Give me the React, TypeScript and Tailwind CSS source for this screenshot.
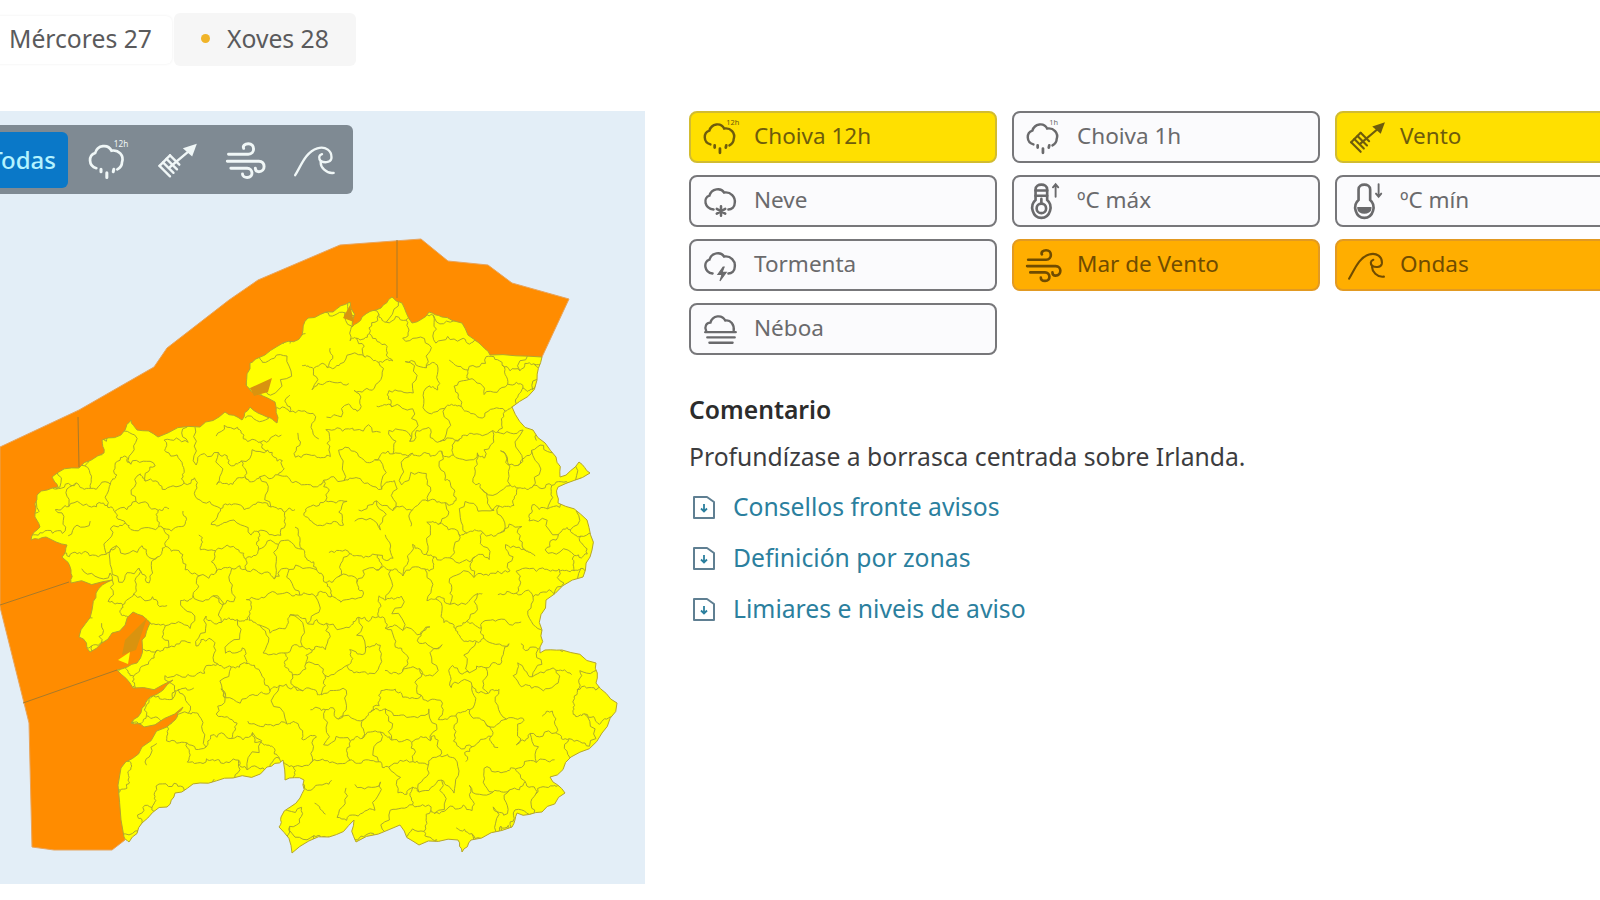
type Pt = [number, number];

const rng = (seed: number) => () => {
  seed = (seed + 0x6d2b79f5) | 0;
  let t = Math.imul(seed ^ (seed >>> 15), 1 | seed);
  t = (t + Math.imul(t ^ (t >>> 7), 61 | t)) ^ t;
  return ((t ^ (t >>> 14)) >>> 0) / 4294967296;
};

const LAND: Pt[] = [
  [542, 357], [490, 355], [479, 343], [462, 323], [442, 317], [429, 312], [412, 323], [402, 303], [392, 297],
  [381, 308], [362, 317], [352, 327], [350, 302], [333, 312], [308, 318], [302, 335], [283, 343], [258, 358],
  [250, 363], [246, 385], [275, 402], [277, 423], [267, 417], [250, 407], [242, 420], [225, 412], [200, 427],
  [158, 437], [137, 430], [131, 420], [125, 430], [102, 440], [104, 453], [79, 468], [52, 477], [58, 487],
  [37, 495], [35, 513], [40, 527], [31, 540], [46, 537], [67, 545], [62, 557], [71, 570], [71, 583], [112, 580],
  [96, 593], [92, 610], [79, 637], [90, 652], [112, 633], [133, 612], [150, 623], [142, 640], [137, 663],
  [117, 670], [133, 688], [173, 680], [150, 697], [142, 708], [131, 723], [144, 727], [183, 707], [175, 720],
  [142, 747], [121, 768], [124, 837], [129, 842], [142, 823], [167, 807], [175, 793], [200, 783], [233, 778],
  [267, 767], [283, 760], [285, 780], [304, 780], [300, 798], [281, 817], [279, 827], [292, 853], [329, 837],
  [354, 820], [356, 842], [400, 825], [419, 845], [458, 840], [462, 852], [471, 840], [512, 827], [517, 813],
  [542, 812], [565, 793], [550, 777], [571, 757], [602, 733], [617, 703], [596, 683], [596, 663], [562, 650],
  [540, 653], [542, 630], [546, 600], [583, 577], [592, 550], [587, 520], [558, 503], [558, 487], [590, 473],
  [579, 462], [560, 477], [556, 457], [533, 430], [512, 407], [537, 380],
];

const SEA: Pt[] = [
  [0, 447], [79, 410], [154, 367], [167, 348], [229, 300], [258, 280], [340, 245], [421, 239], [448, 261],
  [488, 265], [512, 283], [569, 299], [542, 357], [200, 720], [130, 790], [125, 840], [112, 850], [54, 850], [32, 847], [29, 723], [0, 607],
];

const toPath = (pts: Pt[], close = true) =>
  'M' + pts.map((p) => `${p[0].toFixed(1)} ${p[1].toFixed(1)}`).join('L') + (close ? 'Z' : '');

const wiggle = (a: Pt, b: Pt, amp: number, r: () => number, depth: number): Pt[] => {
  if (depth === 0) return [a, b];
  const dx = b[0] - a[0];
  const dy = b[1] - a[1];
  const k = (r() - 0.5) * amp;
  const m: Pt = [(a[0] + b[0]) / 2 - dy * k, (a[1] + b[1]) / 2 + dx * k];
  return [...wiggle(a, m, amp, r, depth - 1), ...wiggle(m, b, amp, r, depth - 1).slice(1)];
};

const roughLand = () => {
  const r = rng(11);
  const out: Pt[] = [];
  LAND.forEach((p, i) => out.push(...wiggle(p, LAND[(i + 1) % LAND.length], 0.3, r, 2).slice(1)));
  return toPath(out);
};

// municipal borders: jittered brick grid with some edges dropped, clipped to the land shape
const borders = () => {
  const r = rng(27);
  const cols = 42;
  const rows = 27;
  const v: Pt[][] = [];
  for (let j = 0; j < rows; j++) {
    v.push([]);
    for (let i = 0; i < cols; i++) {
      v[j].push([i * 16 + (r() - 0.5) * 14 - 8, 270 + j * 23.500 + (r() - 0.5) * 16]);
    }
  }
  let d = '';
  for (let j = 0; j < rows; j++) {
    for (let i = 0; i < cols; i++) {
      if (i + 1 < cols && r() > 0.22) d += toPath(wiggle(v[j][i], v[j][i + 1], 0.6, r, 3), false);
      if (j + 1 < rows && (i + j) % 2 === 0 && r() > 0.22) d += toPath(wiggle(v[j][i], v[j + 1][i], 0.6, r, 3), false);
    }
  }
  return d;
};

const GaliciaMap = () => (
  <svg className="absolute left-0 top-[-111px]" width="645" height="900" viewBox="0 0 645 900">
    <defs>
      <clipPath id="land">
        <path d={roughLand()} />
      </clipPath>
    </defs>
    <path d={toPath(SEA)} fill="#ff8c00" stroke="#e8a45c" strokeWidth="1" />
    <path d={roughLand()} fill="#ffff00" />
    <path d={borders()} clipPath="url(#land)" fill="none" stroke="#aaa92e" strokeWidth="1" />
    <path d={roughLand()} fill="none" stroke="#b5a52c" strokeWidth="1" />
    <path d="M397 240L397 298M78 417L79 467M0 605L69 582M23 703L117 670" fill="none" stroke="#a87a2a" strokeWidth="1" />
    <path d="M250 388L272 378L268 392L254 396ZM125 640L147 618L136 650L122 655ZM343 318L350 305L354 322Z" fill="#d9930f" />
    <path d="M118 660L130 652L128 664Z" fill="#ffff00" />
  </svg>
);

const RainIcon = ({ label, size = 38 }: { label: string; size?: number }) => (
  <svg width={size} height={size} viewBox="0 0 36 36" fill="none" stroke="currentColor" strokeWidth="2.300" strokeLinecap="round">
    <path d="M8 25C1 23 1 14 7 12C9 5 18 4 21 10C27 9 32 14 30 20C30 23 28 25 26 26" />
    <path d="M12 26v2M17 29v4M23 26l-.5 2" strokeWidth="2.600" />
    <text x="23" y="7" fontSize="7" fill="currentColor" stroke="none" fontFamily="Noto Sans, sans-serif">{label}</text>
  </svg>
);

const SnowIcon = () => (
  <svg width="38" height="38" viewBox="0 0 36 36" fill="none" stroke="currentColor" strokeWidth="2.300" strokeLinecap="round">
    <path d="M11 26C2 25 1 15 7 13C9 6 18 5 21 10C27 9 32 14 31 20C31 24 28 26 25 26" />
    <path d="M18 23v9M14 25.500l8 4.500M22 25.500l-8 4.500" strokeWidth="2.400" />
  </svg>
);

const StormIcon = () => (
  <svg width="38" height="38" viewBox="0 0 36 36" fill="none" stroke="currentColor" strokeWidth="2.300" strokeLinecap="round">
    <path d="M10 26C2 25 1 15 7 13C9 6 18 5 21 10C27 9 32 14 31 20C31 24 28 26 25 26" />
    <path d="M20 20l-5 7h4l-2 6 6-8h-4l2-5z" fill="currentColor" strokeWidth="1" />
  </svg>
);

const FogIcon = () => (
  <svg width="38" height="38" viewBox="0 0 36 36" fill="none" stroke="currentColor" strokeWidth="2.200" strokeLinecap="round">
    <path d="M4 20C2 16 4 12 8 12C10 5 19 4 22 10C27 9 31 14 30 20M3 21H32M5 26H31M7 31H29" />
  </svg>
);

const WindIcon = ({ size = 38 }: { size?: number }) => (
  <svg width={size} height={size} viewBox="0 0 36 36" fill="none" stroke="currentColor" strokeWidth="2.500" strokeLinecap="round">
    <path d="M3 13H20C26 13 26 4 20 4C17 4 15 6 16 8" />
    <path d="M2 19H29C35 19 35 28 29 28C27 28 26 27 26 25" />
    <path d="M5 25H19C24 25 25 33 19 33C17 33 15 32 15 30" />
  </svg>
);

const GustIcon = ({ size = 38 }: { size?: number }) => (
  <svg width={size} height={size} viewBox="0 0 36 36" fill="none" stroke="currentColor" strokeWidth="2" strokeLinecap="round">
    <path d="M12 24L31 8" />
    <path d="M35 4L23 8L31 15Z" fill="currentColor" stroke="none" />
    <path d="M3 23L12 32M6 20L15 29M9 17L18 26M12 14L20 22" />
    <path d="M3 23L12 14" />
  </svg>
);

const WaveIcon = ({ size = 38 }: { size?: number }) => (
  <svg width={size} height={size} viewBox="0 0 36 36" fill="none" stroke="currentColor" strokeWidth="2" strokeLinecap="round">
    <path d="M1 31C6 23 10 11 20 8C27 6 33 10 32 17C31 21 25 20 23 19C22 24 28 30 34 29" />
    <path d="M23 19C21 17 21 14 24 13" />
  </svg>
);

const ThermoIcon = ({ dir }: { dir: 'up' | 'down' }) => (
  <svg width="38" height="38" viewBox="0 0 36 36" fill="none" stroke="currentColor" strokeWidth="2.500" strokeLinecap="round">
    <path d="M10 17V7C10 1 21 1 21 7V17C27 22 24 34 15.500 34C7 34 4 22 10 17Z" />
    {dir === 'up' ? (
      <>
        <circle cx="15.500" cy="25" r="4.500" />
        <path d="M10 8H21M10 13H21M15.500 16V20" />
        <path d="M29 14V2M26.500 5L29 2L31.500 5" strokeWidth="1.800" />
      </>
    ) : (
      <>
        <path d="M10 25H21C21 30 10 30 10 25Z" fill="currentColor" />
        <path d="M29 2V14M26.500 11L29 14L31.500 11" strokeWidth="1.800" />
      </>
    )}
  </svg>
);

const FileIcon = () => (
  <svg width="24" height="26" viewBox="0 0 24 26" fill="none" stroke="#5f7f92" strokeWidth="2">
    <path d="M2 3H15L22 8V24H2Z" strokeLinejoin="round" />
    <path d="M12 10V17M9 14.500L12 17.500L15 14.500" stroke="#2b7f9e" strokeWidth="1.800" />
  </svg>
);

type Level = 'none' | 'yellow' | 'orange';

const levelStyles: Record<Level, string> = {
  none: 'bg-[#fbfbfd] border-[#77777a] text-[#6a6a6c]',
  yellow: 'bg-[#ffe000] border-[#d2bc30] text-[#6e5c0c]',
  orange: 'bg-[#ffae00] border-[#e29a22] text-[#704c00]',
};

const filters: { label: string; level: Level; icon: React.ReactNode }[] = [
  { label: 'Choiva 12h', level: 'yellow', icon: <RainIcon label="12h" /> },
  { label: 'Choiva 1h', level: 'none', icon: <RainIcon label="1h" /> },
  { label: 'Vento', level: 'yellow', icon: <GustIcon /> },
  { label: 'Neve', level: 'none', icon: <SnowIcon /> },
  { label: 'ºC máx', level: 'none', icon: <ThermoIcon dir="up" /> },
  { label: 'ºC mín', level: 'none', icon: <ThermoIcon dir="down" /> },
  { label: 'Tormenta', level: 'none', icon: <StormIcon /> },
  { label: 'Mar de Vento', level: 'orange', icon: <WindIcon /> },
  { label: 'Ondas', level: 'orange', icon: <WaveIcon /> },
  { label: 'Néboa', level: 'none', icon: <FogIcon /> },
];

const links = ['Consellos fronte avisos', 'Definición por zonas', 'Limiares e niveis de aviso'];

export default function App() {
  return (
    <div className="w-[1600px] h-[900px] overflow-hidden bg-white pt-[13px] font-['Noto_Sans',sans-serif] text-[24.7px]">
      <div className="flex items-center h-[53px] -ml-[30px]">
        <div className="flex items-center h-[48px] w-[202px] pl-[39px] bg-white text-[#5a5a5c] rounded-md shadow-[0_0_3px_#eeeeee] pb-[2px]">
          Mércores 27
        </div>
        <div className="flex items-center h-[53px] w-[182px] ml-[2px] pl-[27px] gap-[17px] bg-[#f6f6f6] text-[#5a5a5c] rounded-md pb-[2px]">
          <span className="w-[9px] h-[9px] rounded-full bg-[#f0b429]" />
          Xoves 28
        </div>
      </div>

      <div className="flex mt-[45px]">
        <div className="relative w-[645px] h-[773px] shrink-0 bg-[#e3eef7] overflow-hidden">
          <GaliciaMap />
          <div className="absolute -left-[40px] top-[14px] w-[393px] h-[69px] pl-[7px] flex items-center bg-[#7f8a93] rounded-md text-[#f0f7f7]">
            <div className="w-[101px] h-[56px] flex items-center justify-end pr-[12px] bg-[#0a78c8] text-[#b4f3ff] text-[24px] font-medium rounded-md shrink-0">
              Todas
            </div>
            <div className="ml-[5px] w-[69px] flex justify-center"><RainIcon label="12h" size={42} /></div>
            <div className="w-[69px] flex justify-center"><GustIcon size={42} /></div>
            <div className="w-[69px] flex justify-center"><WindIcon size={42} /></div>
            <div className="w-[69px] flex justify-center"><WaveIcon size={42} /></div>
          </div>
        </div>

        <div className="ml-[44px] shrink-0">
          <div className="grid grid-cols-[repeat(3,308px)] auto-rows-[52px] gap-x-[15px] gap-y-3 text-[22.5px]">
            {filters.map((f) => (
              <div key={f.label} className={`flex items-center pl-[11px] gap-[14px] border-2 rounded-lg ${levelStyles[f.level]}`}>
                {f.icon}
                <span className="pb-[3px]">{f.label}</span>
              </div>
            ))}
          </div>

          <h3 className="mt-[38px] font-semibold text-[#2c2c2c] leading-[34px]">Comentario</h3>
          <p className="mt-[13px] text-[#3c3c3e] leading-[34px]">Profundízase a borrasca centrada sobre Irlanda.</p>
          <div className="mt-[16px] flex flex-col gap-[17px]">
            {links.map((l) => (
              <div key={l} className="flex items-center h-[34px] pl-[3px] gap-[17px] text-[#2b7f9e]">
                <FileIcon />
                <span>{l}</span>
              </div>
            ))}
          </div>
        </div>
      </div>
    </div>
  );
}
